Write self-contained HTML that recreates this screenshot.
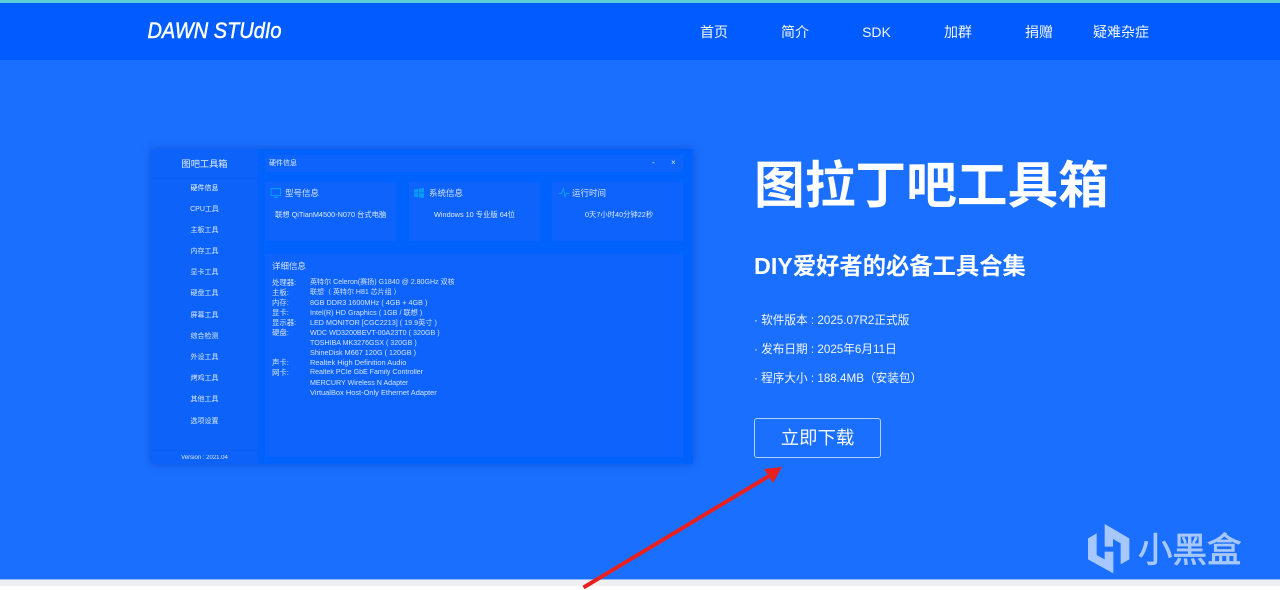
<!DOCTYPE html>
<html lang="zh">
<head>
<meta charset="utf-8">
<title>图拉丁吧工具箱</title>
<style>
html,body{margin:0;padding:0;width:1280px;height:590px;overflow:hidden;background:#fff}
body{position:relative;font-family:"Liberation Sans","Noto Sans CJK SC",sans-serif;color:#fff}
.a{position:absolute;white-space:nowrap}
.nav{top:22px;font-size:14px;line-height:20px;text-align:center;color:#f2f6ff}
.side{left:151px;width:107px;text-align:center;font-size:7px;line-height:10px;color:#dbe8ff;filter:blur(.3px)}
.box{position:absolute;background:#0d63fb}
.ct{font-size:8.5px;line-height:12px;color:#d4e3ff;filter:blur(.3px)}
.cv{font-size:7.3px;line-height:10px;color:#dde9ff;filter:blur(.3px)}
.l{left:272px;font-size:7.4px;line-height:10px;color:#d4e3ff;filter:blur(.3px);margin-top:1px}
.v{left:310px;font-size:7.15px;line-height:10px;color:#d4e3ff;filter:blur(.3px);margin-top:1px}
.info{left:754px;font-size:11.65px;line-height:18px;color:#f0f5ff}
</style>
</head>
<body>
<div class="a" style="left:0;top:0;width:1280px;height:580px;background:#1a6fff"></div>
<div class="a" style="left:0;top:0;width:1280px;height:60px;background:#005cff"></div>
<div class="a" style="left:0;top:0;width:1280px;height:3px;background:#5ccdd6"></div>
<div class="a" style="left:0;top:579px;width:1280px;height:1px;background:#8db8ff"></div>
<div class="a" style="left:0;top:580px;width:1280px;height:6px;background:#eef0f4"></div>

<svg class="a" style="left:144px;top:17px" width="142" height="26" viewBox="0 0 142 26">
<text x="3.5" y="21" font-family="Liberation Sans" font-style="italic" font-size="22" fill="#fff" stroke="#fff" stroke-width=".5" textLength="134" lengthAdjust="spacingAndGlyphs">DAWN STUdIo</text>
</svg>

<div class="a nav" style="left:693px;width:42px">首页</div>
<div class="a nav" style="left:774px;width:42px">简介</div>
<div class="a nav" style="left:855.5px;width:42px">SDK</div>
<div class="a nav" style="left:937px;width:42px">加群</div>
<div class="a nav" style="left:1018px;width:42px">捐赠</div>
<div class="a nav" style="left:1092px;width:58px">疑难杂症</div>

<!-- app window -->
<div class="a" style="left:151px;top:149px;width:542px;height:315px;background:#0062fc;box-shadow:0 0 8px rgba(0,50,160,.45)"></div>
<div class="a" style="left:151px;top:149px;width:107px;height:315px;background:#0d63f9"></div>
<div class="a" style="left:151px;top:178px;width:107px;height:1px;background:#0a60f5"></div>
<div class="a" style="left:151px;top:450px;width:107px;height:1px;background:#0a60f5"></div>
<div class="a side" style="top:158px;font-size:9.2px;line-height:12px;color:#e4eeff">图吧工具箱</div>
<div class="a side" style="top:184px;color:#fff">硬件信息</div>
<div class="a side" style="top:205px">CPU工具</div>
<div class="a side" style="top:226px">主板工具</div>
<div class="a side" style="top:247px">内存工具</div>
<div class="a side" style="top:268px">显卡工具</div>
<div class="a side" style="top:289px">硬盘工具</div>
<div class="a side" style="top:311px">屏幕工具</div>
<div class="a side" style="top:332px">综合检测</div>
<div class="a side" style="top:353px">外设工具</div>
<div class="a side" style="top:374px">烤鸡工具</div>
<div class="a side" style="top:395px">其他工具</div>
<div class="a side" style="top:417px">选项设置</div>
<div class="a side" style="top:453px;font-size:6px">Version : 2021.04</div>

<div class="box" style="left:265px;top:155px;width:418px;height:17px"></div>
<div class="a" style="left:269px;top:159px;font-size:7px;line-height:10px;color:#e4eeff;filter:blur(.3px)">硬件信息</div>
<div class="a" style="left:652px;top:158px;font-size:8px;line-height:10px;color:#dbe8ff">-</div>
<div class="a" style="left:671px;top:158px;font-size:8px;line-height:10px;color:#dbe8ff">×</div>

<div class="box" style="left:265px;top:182px;width:131px;height:59px"></div>
<div class="box" style="left:409px;top:182px;width:131px;height:59px"></div>
<div class="box" style="left:552px;top:182px;width:131px;height:59px"></div>

<svg class="a" style="left:270px;top:187px" width="12" height="12" viewBox="0 0 12 12"><path d="M1 1.5h9.5v7H1zM4 10.5h4M5.7 8.5v2" fill="none" stroke="#0a9cf5" stroke-width="1"/></svg>
<svg class="a" style="left:414px;top:188px" width="10" height="10" viewBox="0 0 10 10"><path d="M0 1.5 4.3.8v3.8H0zM5 .7 10 0v4.6H5zM0 5.3h4.3v3.8L0 8.5zM5 5.3h5V10l-5-.7z" fill="#0a9cf5"/></svg>
<svg class="a" style="left:558px;top:187px" width="12" height="12" viewBox="0 0 12 12"><path d="M.5 6.5h3L5.5 1.5l1.5 8 1.5-3h3" fill="none" stroke="#0a9cf5" stroke-width="1"/></svg>

<div class="a ct" style="left:285px;top:187px">型号信息</div>
<div class="a ct" style="left:429px;top:187px">系统信息</div>
<div class="a ct" style="left:572px;top:187px">运行时间</div>
<div class="a cv" style="left:275px;top:210px">联想 QiTianM4500-N070 台式电脑</div>
<div class="a cv" style="left:434px;top:210px">Windows 10 专业版 64位</div>
<div class="a cv" style="left:585px;top:210px">0天7小时40分钟22秒</div>

<div class="box" style="left:265px;top:254px;width:418px;height:203px"></div>
<div class="a ct" style="left:272px;top:260px">详细信息</div>
<div class="a l" style="top:277px">处理器:</div><div class="a v" style="top:277px;font-size:7.06px">英特尔 Celeron(赛扬) G1840 @ 2.80GHz 双核</div>
<div class="a l" style="top:287px">主板:</div><div class="a v" style="top:287px;font-size:7px">联想（ 英特尔 H81 芯片组 ）</div>
<div class="a l" style="top:297px">内存:</div><div class="a v" style="top:297px;font-size:7.25px">8GB DDR3 1600MHz ( 4GB + 4GB )</div>
<div class="a l" style="top:307px">显卡:</div><div class="a v" style="top:307px;font-size:7.2px">Intel(R) HD Graphics ( 1GB / 联想 )</div>
<div class="a l" style="top:317px">显示器:</div><div class="a v" style="top:317px;font-size:7.2px">LED MONITOR [CGC2213] ( 19.9英寸 )</div>
<div class="a l" style="top:327px">硬盘:</div><div class="a v" style="top:327px;font-size:7.17px">WDC WD3200BEVT-00A23T0 ( 320GB )</div>
<div class="a v" style="top:337px;font-size:7.1px">TOSHIBA MK3276GSX ( 320GB )</div>
<div class="a v" style="top:347px;font-size:7.25px">ShineDisk M667 120G ( 120GB )</div>
<div class="a l" style="top:357px">声卡:</div><div class="a v" style="top:357px;font-size:7.45px">Realtek High Definition Audio</div>
<div class="a l" style="top:367px">网卡:</div><div class="a v" style="top:367px;font-size:7.07px">Realtek PCIe GbE Family Controller</div>
<div class="a v" style="top:377px;font-size:7.1px">MERCURY Wireless N Adapter</div>
<div class="a v" style="top:387px;font-size:7.45px">VirtualBox Host-Only Ethernet Adapter</div>

<!-- right column -->
<div class="a" style="left:754px;top:154px;font-size:50.7px;line-height:64px;font-weight:bold">图拉丁吧工具箱</div>
<div class="a" style="left:754px;top:250px;font-size:23.3px;line-height:32px;font-weight:bold">DIY爱好者的必备工具合集</div>
<div class="a info" style="top:312px">· 软件版本 : 2025.07R2正式版</div>
<div class="a info" style="top:341px">· 发布日期 : 2025年6月11日</div>
<div class="a info" style="top:370px">· 程序大小 : 188.4MB（安装包）</div>

<div class="a" style="left:754px;top:418px;width:125px;height:38px;border:1px solid #b4d0ff;border-radius:3px;text-align:center;font-size:18.4px;line-height:38px;color:#f5f8ff">立即下载</div>

<!-- arrow -->
<svg class="a" style="left:570px;top:455px" width="230" height="135" viewBox="0 0 230 135">
<path d="M13.5 132.5 199 21" stroke="#e8201f" stroke-width="4" fill="none"/>
<path d="M212 12 194 14 203 28z" fill="#e8201f"/>
</svg>

<!-- watermark -->
<svg class="a" style="left:1084px;top:520px" width="50" height="58" viewBox="0 0 150 174">
<path d="M62 12 136 55V118L110 133V70L87 57V80H62zM12 55 38 40V105L62 118V95H88V160L12 118z" fill="#a6c8ff"/>
</svg>
<div class="a" style="left:1138px;top:526px;font-size:34.5px;line-height:50px;color:#a6c8ff;-webkit-text-stroke:.8px #a6c8ff">小黑盒</div>
</body>
</html>
